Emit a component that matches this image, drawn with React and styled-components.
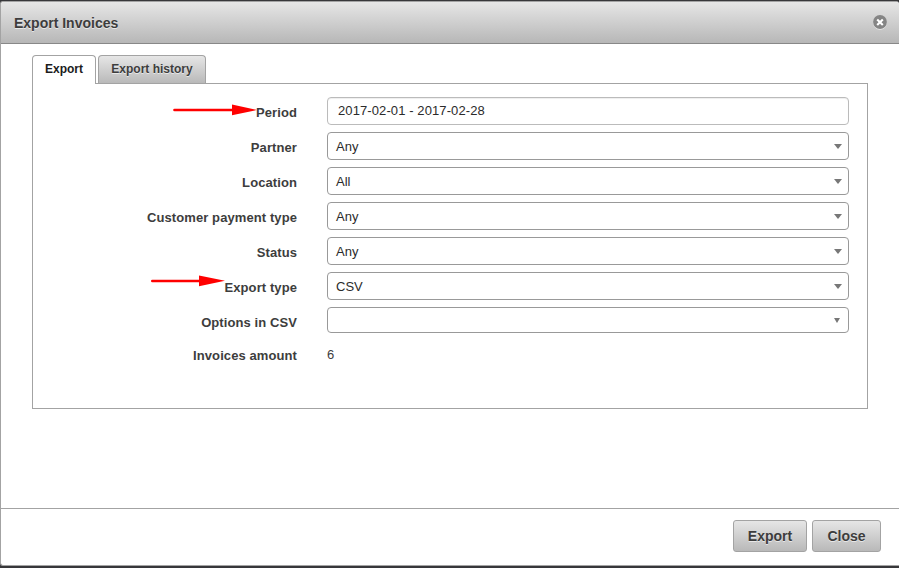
import React from "react";
import styled, { createGlobalStyle } from "styled-components";

const GlobalStyle = createGlobalStyle`
  *, *::before, *::after { box-sizing: border-box; }
  body { margin: 0; overflow: hidden; background: #37373a; }
  body, button { font-family: "Liberation Sans", Arial, Helvetica, sans-serif; }
`;

const Backdrop = styled.div`
  width: 899px;
  height: 568px;
  padding-top: 1px;
  background: #37373a;
  overflow: hidden;
`;

const Dialog = styled.section`
  display: flex;
  flex-direction: column;
  height: 565px;
  border: solid #a3a3a3;
  border-width: 1px 0 1px 1px;
  border-radius: 3px 3px 0 3px;
  background: #fff;
  overflow: hidden;
`;

const Header = styled.header`
  display: flex;
  align-items: center;
  justify-content: space-between;
  flex: none;
  height: 42px;
  padding: 0 12px 0 13px;
  border-bottom: 1px solid #888;
  background: linear-gradient(#e6e6e6, #b7b7b7);
`;

const Title = styled.h1`
  margin: 0;
  font-size: 14px;
  line-height: 20px;
  color: #3d3d3d;
  text-shadow: 0 1px 0 rgba(255, 255, 255, 0.6);
`;

const CloseIcon = styled.button`
  display: flex;
  padding: 0;
  border: 0;
  background: none;
`;

const Content = styled.main`
  flex: 1;
  padding: 11px 31px 0;
`;

const TabList = styled.div`
  display: flex;
  gap: 2px;
  height: 28px;
`;

const Tab = styled.button`
  width: ${(p) => p.$width};
  height: ${(p) => (p.$active ? "29px" : "28px")};
  padding: 0 0 ${(p) => (p.$active ? "3px" : "1px")};
  border: 1px solid #a3a3a3;
  border-bottom: 0;
  border-radius: 4px 4px 0 0;
  background: ${(p) => (p.$active ? "#fff" : "linear-gradient(#e6e6e6, #b9b9b9)")};
  color: ${(p) => (p.$active ? "#1c1c1c" : "#3d3d3d")};
  font-size: 12px;
  font-weight: bold;
  text-shadow: ${(p) => (p.$active ? "none" : "0 1px 0 rgba(255,255,255,.6)")};
  position: relative;
`;

const Panel = styled.div`
  width: 836px;
  height: 326px;
  padding: 13px 18px 0 0;
  border: 1px solid #a3a3a3;
`;

const Row = styled.div`
  display: grid;
  grid-template-columns: 264px 522px;
  column-gap: 30px;
  height: 35px;
`;

const Label = styled.label`
  padding-top: 6px;
  color: #3d3d3d;
  font-size: 13px;
  font-weight: bold;
  line-height: 20px;
  letter-spacing: 0.09px;
  text-align: right;
  white-space: nowrap;
`;

const SummaryLabel = styled(Label)`
  padding-top: 4px;
`;

const Field = styled.div`
  display: flex;
  justify-content: space-between;
  align-items: center;
  height: 28px;
  padding: 1px 6px 0 8px;
  border: 1px solid #999;
  border-radius: 4px;
  color: #2b2b2b;
  font-size: 13px;
  line-height: 21px;
`;

const DateField = styled(Field)`
  padding: 0 9px 1px 10px;
  border-color: #bbb;
  box-shadow: inset 0 1px 1px rgba(0, 0, 0, 0.07);
  letter-spacing: 0.1px;
`;

const MultiField = styled(Field)`
  height: 26px;
  padding-top: 0;
`;

const Caret = styled.span`
  width: 0;
  height: 0;
  border: solid transparent;
  border-width: 5px 4px 0;
  border-top-color: #777;
`;

const SmallCaret = styled(Caret)`
  border-width: 5px 3px 0;
  margin-right: 2px;
`;

const Amount = styled.span`
  padding-top: 3px;
  color: #3d3d3d;
  font-size: 13px;
  line-height: 20px;
`;

const Footer = styled.footer`
  display: flex;
  flex: none;
  justify-content: flex-end;
  gap: 5px;
  height: 57px;
  padding: 11px 18px 0;
  border-top: 1px solid #a3a3a3;
`;

const Button = styled.button`
  width: ${(p) => p.$width};
  height: 32px;
  padding: 0;
  border: 1px solid #a3a3a3;
  border-radius: 3px;
  background: linear-gradient(#e6e6e6, #b9b9b9);
  color: #3d3d3d;
  font-size: 14px;
  font-weight: bold;
  text-shadow: 0 1px 0 rgba(255, 255, 255, 0.6);
`;

const Arrow = styled.svg`
  position: absolute;
  left: ${(p) => p.$left};
  top: ${(p) => p.$top};
  pointer-events: none;
`;

const selects = [
  ["Partner", "Any"],
  ["Location", "All"],
  ["Customer payment type", "Any"],
  ["Status", "Any"],
  ["Export type", "CSV"],
];

function PointerArrow({ left, top }) {
  return (
    <Arrow $left={left} $top={top} width="85" height="12" viewBox="0 0 85 12">
      <path d="M2.5 6H62" stroke="#f00" strokeWidth="2.6" strokeLinecap="round" />
      <path d="M60 .6 85 6 60 11.2Z" fill="#f00" />
    </Arrow>
  );
}

function ShortPointerArrow({ left, top }) {
  return (
    <Arrow $left={left} $top={top} width="76" height="12" viewBox="0 0 76 12">
      <path d="M2.3 6H50" stroke="#f00" strokeWidth="2.6" strokeLinecap="round" />
      <path d="M49 .6 75 5.7 49 11.2Z" fill="#f00" />
    </Arrow>
  );
}

export default function App() {
  return (
    <Backdrop>
      <GlobalStyle />
      <Dialog>
        <Header>
          <Title>Export Invoices</Title>
          <CloseIcon aria-label="Close dialog">
            <svg width="14" height="15" viewBox="0 0 14 15">
              <circle cx="7" cy="8" r="6.8" fill="#eee" />
              <circle cx="7" cy="7" r="6.9" fill="#858585" />
              <path d="m4.2 4.4 5.6 5.6m0-5.6L4.2 10" stroke="#fff" strokeWidth="2.1" />
            </svg>
          </CloseIcon>
        </Header>
        <Content>
          <TabList>
            <Tab $active $width="64px">Export</Tab>
            <Tab $width="108px">Export history</Tab>
          </TabList>
          <Panel>
            <Row>
              <Label>Period</Label>
              <DateField>2017-02-01 - 2017-02-28</DateField>
            </Row>
            {selects.map(([label, value]) => (
              <Row key={label}>
                <Label>{label}</Label>
                <Field>
                  {value}
                  <Caret />
                </Field>
              </Row>
            ))}
            <Row>
              <Label>Options in CSV</Label>
              <MultiField>
                <span />
                <SmallCaret />
              </MultiField>
            </Row>
            <Row>
              <SummaryLabel as="span">Invoices amount</SummaryLabel>
              <Amount>6</Amount>
            </Row>
          </Panel>
        </Content>
        <Footer>
          <Button $width="74px">Export</Button>
          <Button $width="69px">Close</Button>
        </Footer>
      </Dialog>
      <PointerArrow left="172px" top="104px" />
      <ShortPointerArrow left="150px" top="275px" />
    </Backdrop>
  );
}
